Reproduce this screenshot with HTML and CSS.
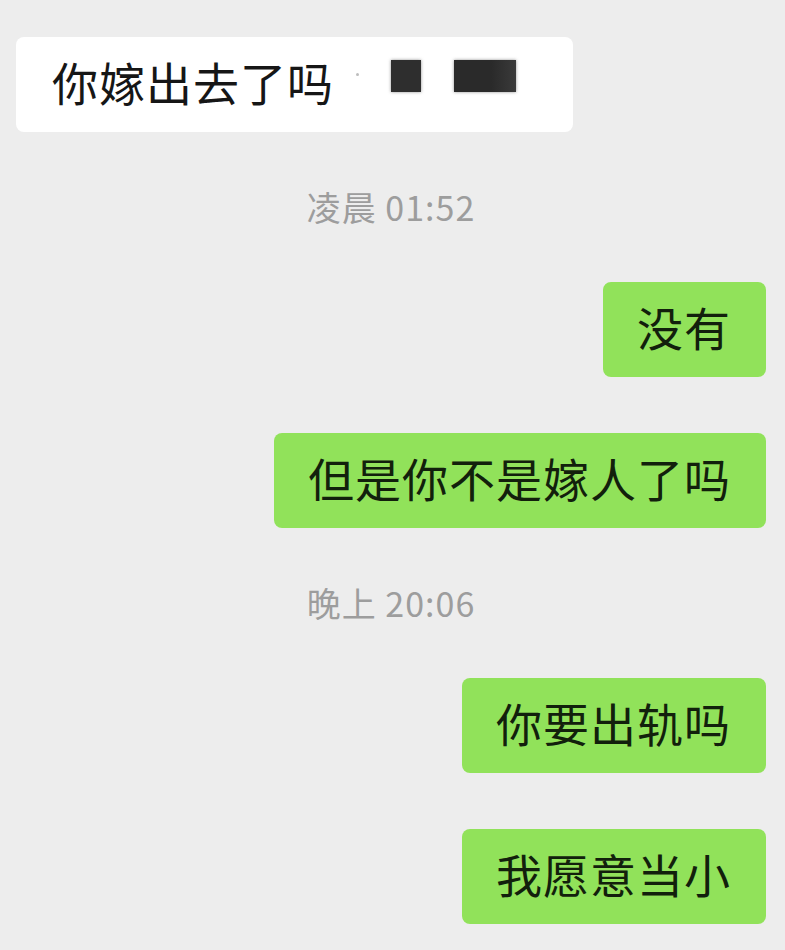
FILE: index.html
```html
<!DOCTYPE html>
<html lang="zh-CN">

<head>
    <meta charset="UTF-8">
    <meta name="viewport" content="width=device-width, initial-scale=1.0">
    <title>聊天记录</title>
    <link rel="stylesheet" href="styles.css">
</head>

<body>
    <!-- Chat -->
    <div class="chat">
        <div class="row left">
            <div class="bubble white">
                你嫁出去了吗<span class="dot"></span><span class="mask small"></span><span class="mask wide"></span>
            </div>
        </div>

        <div class="time">凌晨 01:52</div>

        <div class="row right">
            <div class="bubble green">没有</div>
        </div>

        <div class="row right">
            <div class="bubble green">但是你不是嫁人了吗</div>
        </div>

        <div class="time">晚上 20:06</div>

        <div class="row right">
            <div class="bubble green">你要出轨吗</div>
        </div>

        <div class="row right">
            <div class="bubble green">我愿意当小</div>
        </div>
    </div>
</body>

</html>
```

FILE: styles.css
```css
/* Global Styles */
body {
    margin: 0;
    padding: 0;
    background-color: #ededed;
    font-family: "Noto Sans CJK SC", "Noto Sans", sans-serif;
    color: #161616;
}

/* Chat Column */
.chat {
    display: flex;
    flex-direction: column;
    gap: 56px;
    padding: 37px 19px 0 16px;
}

.row {
    display: flex;
}

.row.left {
    justify-content: flex-start;
}

.row.right {
    justify-content: flex-end;
}

/* Bubbles */
.bubble {
    font-size: 46px;
    line-height: 47px;
    letter-spacing: 1px;
    padding: 21px 35px 27px 34px;
    border-radius: 8px;
}

.bubble.white {
    background: #ffffff;
    width: 486px;
    padding-left: 36px;
    display: flex;
    align-items: center;
}

.bubble.green {
    background: #91e25a;
    color: #12200c;
}

/* Redacted name */
.dot {
    width: 3px;
    height: 3px;
    border-radius: 50%;
    background: #bdbdbd;
    margin: 0 0 14px 22px;
}

.mask {
    display: inline-block;
    height: 32px;
    background: #2e2e2e;
    margin-bottom: 12px;
    box-shadow: 0 0 3px rgba(40, 40, 40, 0.5);
}

.mask.small {
    width: 30px;
    margin-left: 32px;
}

.mask.wide {
    width: 62px;
    margin-left: 33px;
    background: linear-gradient(to right, #2a2a2a 60%, #3a3a3a);
}

/* Timestamps */
.time {
    text-align: center;
    font-size: 34px;
    line-height: 38px;
    letter-spacing: 1px;
    color: #9d9d9d;
}
```
